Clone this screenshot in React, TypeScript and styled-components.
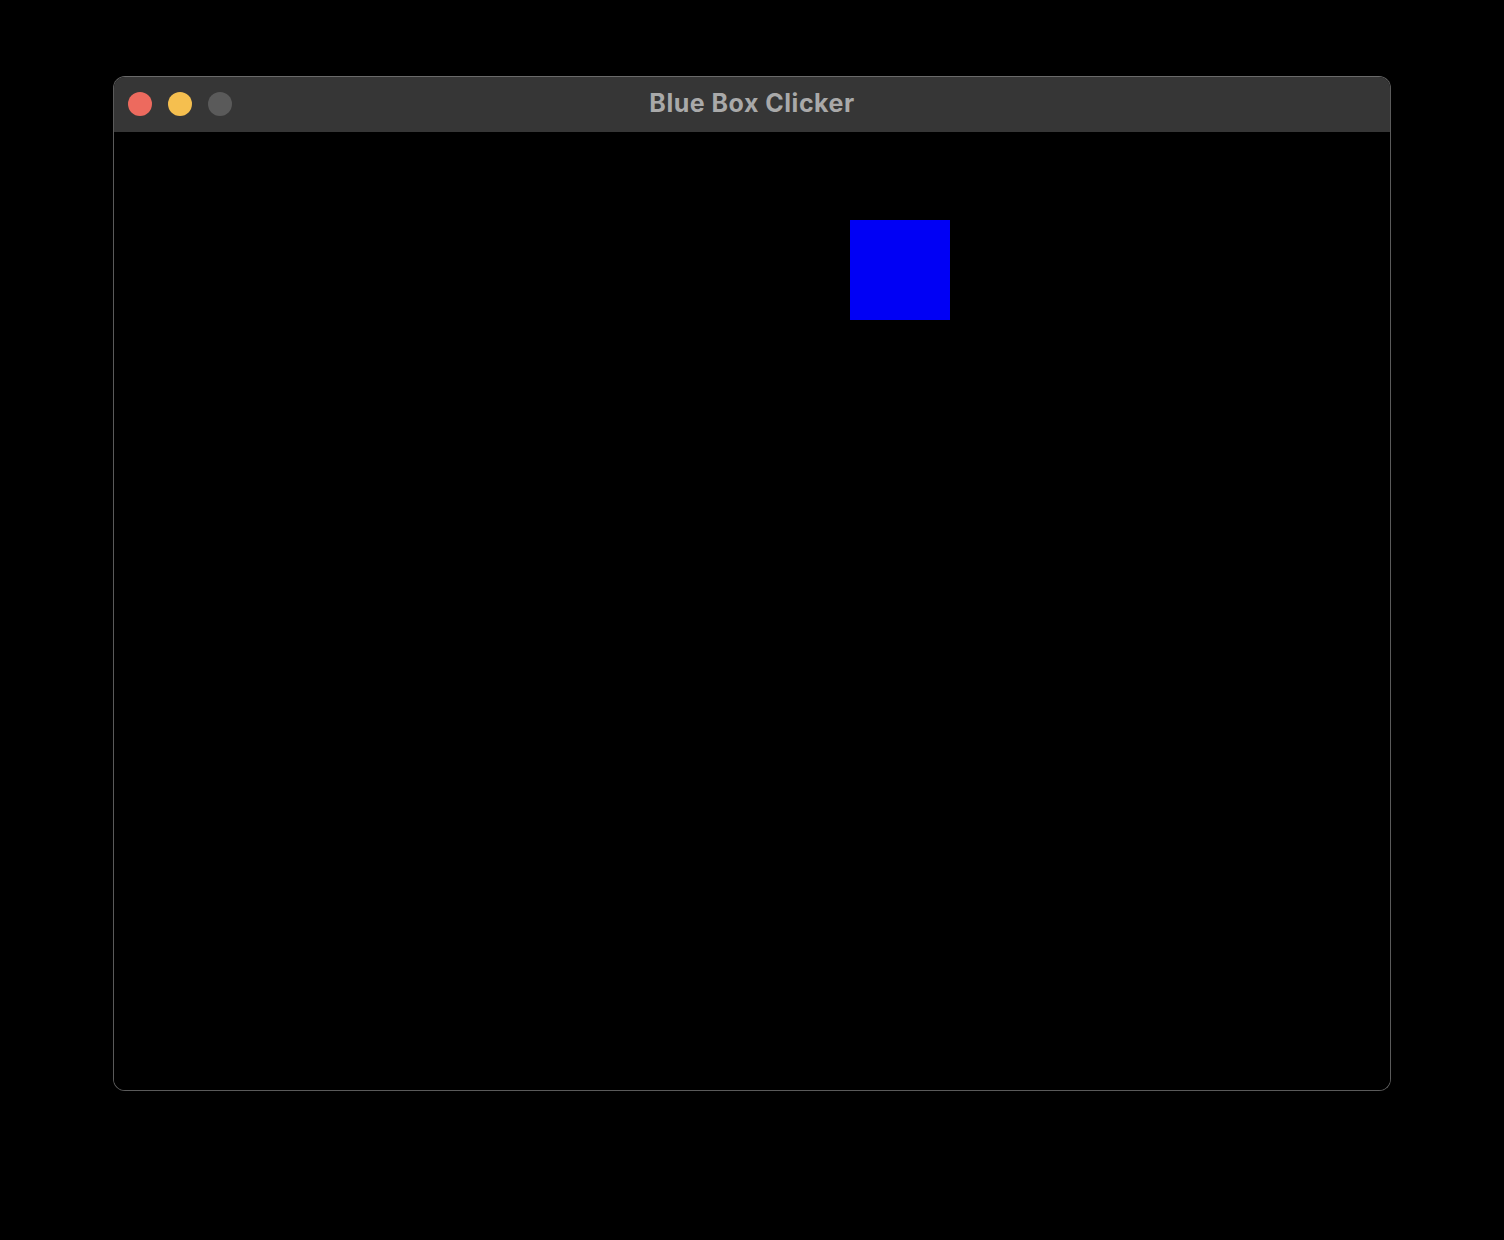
import * as React from 'react'
import styled, { createGlobalStyle } from 'styled-components'

const GlobalStyle = createGlobalStyle`
  html, body {
    margin: 0;
    padding: 0;
    background: #000;
  }
  body {
    font-family: Inter, "Liberation Sans", sans-serif;
  }
`

const Page = styled.div`
  width: 1504px;
  height: 1240px;
  padding: 76px 0 0 113px;
  box-sizing: border-box;
`

const Window = styled.div`
  width: 1278px;
  height: 1015px;
  box-sizing: border-box;
  border: 1px solid #5a5a5a;
  border-top-color: #6a6a6a;
  border-radius: 12px;
  overflow: hidden;
  display: flex;
  flex-direction: column;
  background: #000;
`

const TitleBar = styled.div`
  height: 55px;
  flex: none;
  background: #363636;
  display: flex;
  align-items: center;
  position: relative;
  padding: 0 0 2px 14px;
  box-sizing: border-box;
  gap: 16px;
`

const Light = styled.span<{ $color: string }>`
  width: 24px;
  height: 24px;
  border-radius: 50%;
  background: ${p => p.$color};
`

const Title = styled.div`
  position: absolute;
  left: 0;
  right: 0;
  top: 0;
  bottom: 4px;
  display: flex;
  align-items: center;
  justify-content: center;
  color: #a9a9a9;
  font-size: 25px;
  font-weight: 700;
  letter-spacing: 0.5px;
  pointer-events: none;
`

const Canvas = styled.div`
  flex: 1;
  position: relative;
  background: #000;
`

const Box = styled.div`
  position: absolute;
  width: 100px;
  height: 100px;
  background: #0000f5;
  cursor: pointer;
`

export default function App() {
  const [pos, setPos] = React.useState({ x: 736, y: 88 })

  const move = () => {
    setPos({
      x: Math.floor(Math.random() * 1176),
      y: Math.floor(Math.random() * 858),
    })
  }

  return (
    <Page>
      <GlobalStyle />
      <Window>
        <TitleBar>
          <Light $color="#ed6a5e" />
          <Light $color="#f5bf4f" />
          <Light $color="#5a5a5a" />
          <Title>Blue Box Clicker</Title>
        </TitleBar>
        <Canvas>
          <Box onClick={move} style={{ left: pos.x, top: pos.y }} />
        </Canvas>
      </Window>
    </Page>
  )
}
